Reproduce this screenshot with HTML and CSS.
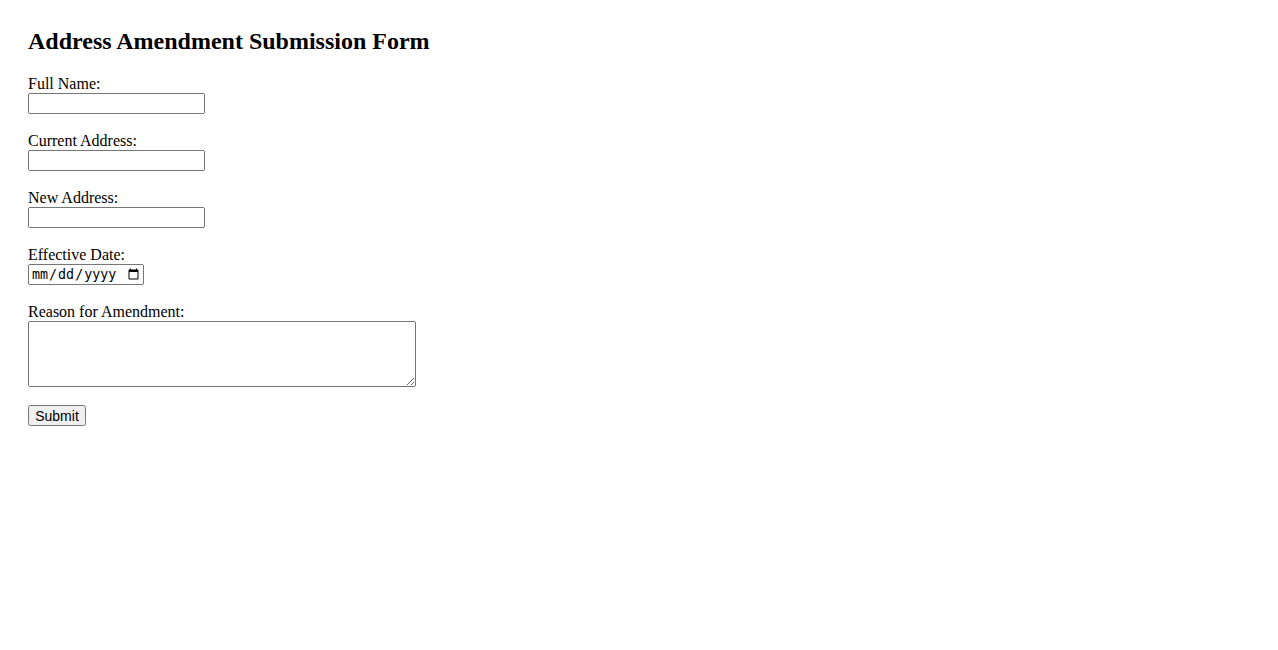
FILE: index.html
```html
<!DOCTYPE html>
<html>
<head>
<meta charset="utf-8">
<title>Address Amendment Submission Form</title>
<link rel="stylesheet" href="styles.css">
</head>
<body>
<h2 class="title">Address Amendment Submission Form</h2>
<form class="form">
<label for="name">Full Name:</label><br>
<input class="text" type="text" id="name"><br><br>
<label for="cur">Current Address:</label><br>
<input class="text" type="text" id="cur"><br><br>
<label for="new">New Address:</label><br>
<input class="text" type="text" id="new"><br><br>
<label for="date">Effective Date:</label><br>
<input class="date" type="date" id="date"><br><br>
<label for="reason">Reason for Amendment:</label><br>
<textarea class="area" id="reason" rows="4"></textarea><br><br>
<button class="submit" type="submit">Submit</button>
</form>
</body>
</html>
```
FILE: styles.css
```css
body {
  margin: 8px;
  padding: 20px;
  font-family: "Liberation Serif", "Times New Roman", serif;
  font-size: 16px;
  color: #000;
  background: #fff;
}
.title {
  margin: 0 0 20px 0;
  font-size: 24px;
  font-weight: bold;
}
.form {
  margin: 0;
}
.text {
  width: 177px;
  height: 21px;
  box-sizing: border-box;
  font-family: "Liberation Sans", Arial, sans-serif;
  font-size: 13.33px;
}
.date {
  width: 116px;
  height: 21px;
  box-sizing: border-box;
  font-size: 13.33px;
}
.area {
  width: 388px;
  height: 66px;
  box-sizing: border-box;
  vertical-align: bottom;
}
.submit {
  width: 58px;
  height: 21px;
  box-sizing: border-box;
  padding: 1px 4px;
  font-family: "Liberation Sans", Arial, sans-serif;
  font-size: 14px;
}
```
